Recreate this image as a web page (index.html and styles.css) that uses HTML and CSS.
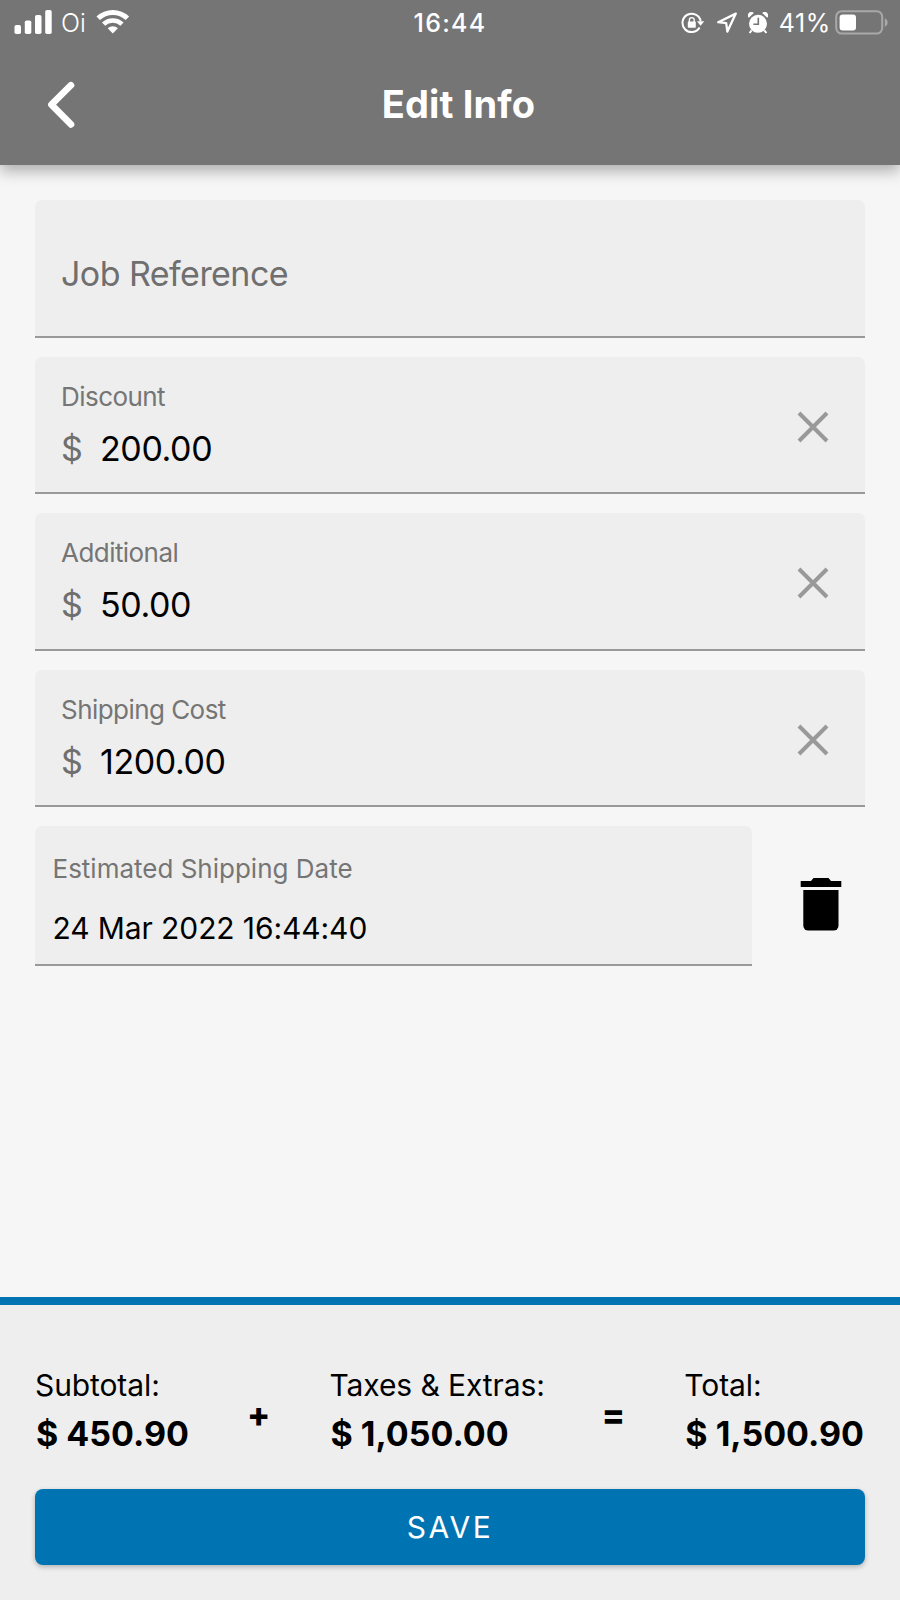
FILE: index.html
```
<!DOCTYPE html>
<html lang="en">
<head>
  <meta charset="UTF-8">
  <meta name="viewport" content="width=device-width, initial-scale=1.0">
  <title>Edit Info</title>
  <link rel="stylesheet" href="styles.css">
</head>
<body>
  <header class="header">
    <div class="status-bar">
      <div class="status-left">
        <svg class="signal" width="38" height="24" viewBox="0 0 38 24" fill="#fff">
          <rect x="0.5" y="15" width="6.5" height="9" rx="1.8"/>
          <rect x="10.8" y="10.5" width="6.5" height="13.5" rx="1.8"/>
          <rect x="21" y="5" width="6.5" height="19" rx="1.8"/>
          <rect x="31.2" y="0" width="6.5" height="24" rx="1.8"/>
        </svg>
        <span class="carrier">Oi</span>
        <svg class="wifi" width="34" height="25" viewBox="0 0 34 25">
          <path d="M2.2 9.3a21 21 0 0 1 29.2 0" fill="none" stroke="#fff" stroke-width="5"/>
          <path d="M7.6 15.2a13.3 13.3 0 0 1 18.4 0" fill="none" stroke="#fff" stroke-width="4.6"/>
          <path d="M11.7 19.3a7.6 7.6 0 0 1 10.2 0L16.8 24.5z" fill="#fff"/>
        </svg>
      </div>
      <div class="time">16:44</div>
      <div class="status-right">
        <svg class="lock" width="24" height="22" viewBox="0 0 24 22">
          <path d="M18.6 15.6A9.2 9.2 0 1 1 19.7 9" fill="none" stroke="#fff" stroke-width="2"/>
          <path d="M16 9.2h7.2l-3.6 4.6z" fill="#fff"/>
          <rect x="6.8" y="9.6" width="8" height="6.2" rx="0.8" fill="#fff"/>
          <path d="M8.4 10V8a2.4 2.4 0 0 1 4.8 0v2" fill="none" stroke="#fff" stroke-width="1.4"/>
        </svg>
        <svg class="location" width="22" height="22" viewBox="0 0 22 22">
          <path d="M19.8 1.6L2.2 10.2l8 1 1.2 8.4z" fill="none" stroke="#fff" stroke-width="2.3" stroke-linejoin="round"/>
        </svg>
        <svg class="alarm" width="20" height="22" viewBox="0 0 20 22">
          <circle cx="10" cy="11.8" r="9" fill="#fff"/>
          <path d="M0.8 5.8a3.4 3.4 0 0 1 5-4.8zM19.2 5.8a3.4 3.4 0 0 0-5-4.8z" fill="#fff"/>
          <path d="M3.6 18.4L1.6 21M16.4 18.4l2 2.6" stroke="#fff" stroke-width="2"/>
          <path d="M10.3 5.8v6.4H5.4" fill="none" stroke="#757575" stroke-width="1.6"/>
        </svg>
        <span class="percent">41%</span>
        <svg class="battery" width="54" height="25" viewBox="0 0 54 25">
          <rect x="1.2" y="1.2" width="46" height="22.4" rx="5.5" fill="none" stroke="#a8a8a8" stroke-width="2"/>
          <rect x="4.6" y="4.4" width="16.4" height="16" rx="3" fill="#fff"/>
          <path d="M49.8 8.2c3.8 1.5 3.8 7 0 8.5z" fill="#a8a8a8"/>
        </svg>
      </div>
    </div>
    <div class="title-bar">
      <svg class="back" width="28" height="48" viewBox="0 0 28 48">
        <path d="M24 4.2L4.4 23.6 24 43.4" fill="none" stroke="#fff" stroke-width="6.6" stroke-linecap="round" stroke-linejoin="round"/>
      </svg>
      <h1 class="title">Edit Info</h1>
    </div>
  </header>

  <main class="form">
    <div class="field empty">
      <div class="placeholder">Job Reference</div>
    </div>

    <div class="field">
      <div>
        <div class="label">Discount</div>
        <div class="value"><span class="currency">$</span>200.00</div>
      </div>
      <svg class="clear" width="32" height="32" viewBox="0 0 32 32">
        <path d="M2 2l28 28M30 2L2 30" stroke="#999" stroke-width="4"/>
      </svg>
    </div>

    <div class="field">
      <div>
        <div class="label">Additional</div>
        <div class="value"><span class="currency">$</span>50.00</div>
      </div>
      <svg class="clear" width="32" height="32" viewBox="0 0 32 32">
        <path d="M2 2l28 28M30 2L2 30" stroke="#999" stroke-width="4"/>
      </svg>
    </div>

    <div class="field">
      <div>
        <div class="label">Shipping Cost</div>
        <div class="value"><span class="currency">$</span>1200.00</div>
      </div>
      <svg class="clear" width="32" height="32" viewBox="0 0 32 32">
        <path d="M2 2l28 28M30 2L2 30" stroke="#999" stroke-width="4"/>
      </svg>
    </div>

    <div class="date-row">
      <div class="date-field">
        <div class="date-label">Estimated Shipping Date</div>
        <div class="date">24 Mar 2022 16:44:40</div>
      </div>
      <svg class="trash" width="42" height="53" viewBox="0 0 42 53">
        <path d="M0.7 3H11l2.5-3h15L31 3h10.3v6H0.7z"/>
        <path d="M3.3 12h35.2v35.6a5 5 0 0 1-5 5H8.3a5 5 0 0 1-5-5z"/>
      </svg>
    </div>
  </main>

  <footer class="footer">
    <div class="totals">
      <div class="total">
        <div class="total-label">Subtotal:</div>
        <div class="amount">$ 450.90</div>
      </div>
      <div class="operator">+</div>
      <div class="total">
        <div class="total-label">Taxes &amp; Extras:</div>
        <div class="amount">$ 1,050.00</div>
      </div>
      <div class="operator">=</div>
      <div class="total">
        <div class="total-label">Total:</div>
        <div class="amount">$ 1,500.90</div>
      </div>
    </div>
    <button class="save">SAVE</button>
  </footer>
</body>
</html>
```
FILE: styles.css
```
* {
  box-sizing: border-box;
}
body {
  margin: 0;
  height: 1600px;
  display: flex;
  flex-direction: column;
  overflow: hidden;
  font-family: Inter, "Liberation Sans", sans-serif;
  background-color: #f6f6f6;
  color: #000;
}
svg {
  display: block;
  flex-shrink: 0;
}

/* header */
.header {
  height: 165px;
  background-color: #757575;
  color: #fff;
  box-shadow: 0 6px 14px rgba(0,0,0,0.3);
}
.status-bar {
  display: grid;
  grid-template-columns: 1fr auto 1fr;
  height: 46px;
  padding: 0 11px;
  font-size: 25px;
  line-height: 46px;
}
.status-left, .status-right {
  display: flex;
  align-items: center;
}
.status-left {
  padding-left: 3px;
}
.status-right {
  justify-content: flex-end;
}
.signal {
  margin-top: -2px;
}
.carrier {
  margin-left: 9px;
  font-weight: 300;
}
.wifi {
  margin: -4px 0 0 10px;
}
.time {
  font-weight: 500;
  letter-spacing: 1.3px;
}
.location {
  margin-left: 11px;
}
.alarm {
  margin-left: 10px;
}
.percent {
  margin-left: 11px;
  letter-spacing: 0.6px;
}
.battery {
  margin: -2px 0 0 4px;
}
.title-bar {
  display: flex;
  align-items: center;
  height: 118px;
  padding: 0 58px 0 47px;
}
.title {
  flex: 1;
  margin: -2px 0 0;
  font-size: 38px;
  line-height: 46px;
  font-weight: 700;
  letter-spacing: 0.15px;
  text-align: center;
}

/* form */
.form {
  flex: 1;
  display: flex;
  flex-direction: column;
  gap: 19px;
  padding: 35px 35px 0;
}
.field {
  display: flex;
  justify-content: space-between;
  height: 137.5px;
  padding: 24px 36px 0 26px;
  background-color: #eee;
  border-bottom: 2px solid #999;
  border-radius: 7px 7px 0 0;
}
.field.empty {
  padding-top: 53px;
}
.placeholder {
  font-size: 34px;
  line-height: 42px;
  letter-spacing: -0.55px;
  color: #6f6f6f;
}
.label, .date-label {
  font-size: 26px;
  line-height: 32px;
  color: #757575;
}
.label {
  letter-spacing: -0.55px;
}
.value {
  margin-top: 15px;
  font-size: 34px;
  line-height: 42px;
  letter-spacing: -0.4px;
}
.currency {
  display: inline-block;
  width: 39px;
  color: #6f6f6f;
}
.clear {
  margin-top: 30px;
}
.date-row {
  display: flex;
  align-items: center;
}
.date-field {
  width: 717px;
  height: 140px;
  padding: 27px 17.5px 0;
  background-color: #eee;
  border-bottom: 2px solid #999;
  border-radius: 7px 7px 0 0;
}
.date {
  margin-top: 25px;
  font-size: 30px;
  line-height: 36px;
  letter-spacing: -0.1px;
}
.trash {
  margin: 17px 0 0 48px;
}

/* totals */
.footer {
  height: 303px;
  padding: 62px 35px 0;
  background-color: #eee;
  border-top: 8px solid #0074b3;
}
.totals {
  display: flex;
  justify-content: space-between;
  align-items: center;
}
.total-label {
  font-size: 30px;
  line-height: 36px;
  letter-spacing: -0.1px;
}
.amount {
  margin-top: 10px;
  padding: 0 1px;
  font-size: 34px;
  line-height: 42px;
  font-weight: 700;
}
.operator {
  margin-top: 7px;
  padding-right: 2px;
  font-size: 34px;
  line-height: 42px;
  font-weight: 800;
}
.save {
  display: block;
  width: 100%;
  height: 76px;
  margin-top: 34px;
  padding: 0;
  border: none;
  border-radius: 8px;
  background-color: #0074b3;
  color: #fff;
  font-family: inherit;
  font-size: 30px;
  letter-spacing: 2.5px;
  box-shadow: 0 2px 5px rgba(0,0,0,0.25);
}
```
